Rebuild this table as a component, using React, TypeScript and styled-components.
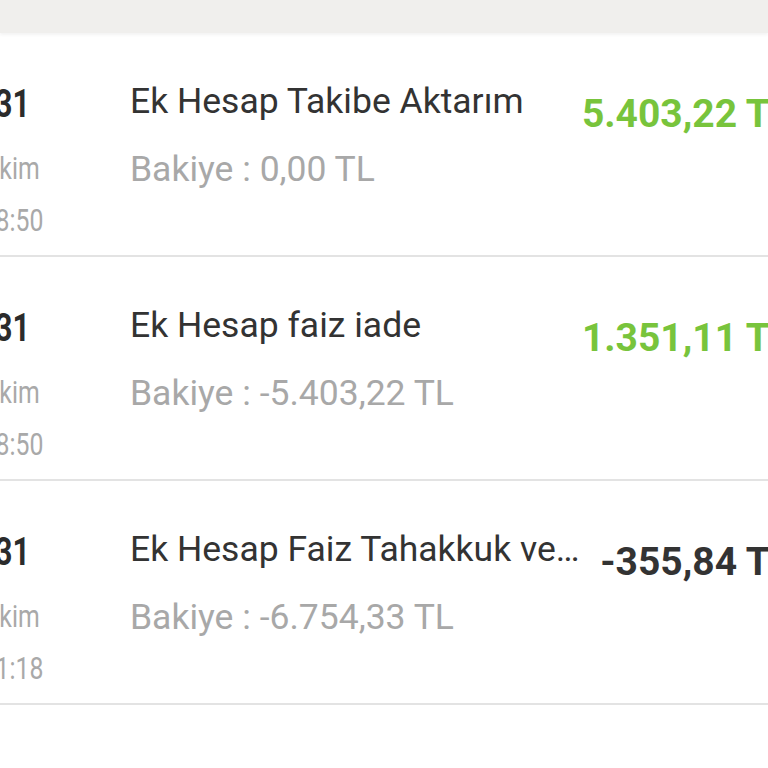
import React from 'react';
import styled, { createGlobalStyle } from 'styled-components';

type TTransaction = {
  day: string;
  month: string;
  time: string;
  title: string;
  balance: string;
  amount: string;
};

const transactions: TTransaction[] = [
  { day: '31', month: 'Ekim', time: '18:50', title: 'Ek Hesap Takibe Aktarım', balance: '0,00 TL', amount: '5.403,22 TL' },
  { day: '31', month: 'Ekim', time: '18:50', title: 'Ek Hesap faiz iade', balance: '-5.403,22 TL', amount: '1.351,11 TL' },
  { day: '31', month: 'Ekim', time: '11:18', title: 'Ek Hesap Faiz Tahakkuk ve Vergi Tahsilatı', balance: '-6.754,33 TL', amount: '-355,84 TL' },
];

const isIncome = (amount: string) => !amount.startsWith('-');

export default function App() {
  return (
    <>
      <GlobalStyle />
      <Page>
        <TopBand />
        <StyledList>
          {transactions.map((t, i) => (
            <Row key={i}>
              {/* DATE (narrow type) */}
              <DateColumn>
                <Day>{t.day}</Day>
                <Month>{t.month}</Month>
                <Time>{t.time}</Time>
              </DateColumn>

              {/* DESCRIPTION */}
              <Details>
                <Title>{t.title}</Title>
                <Balance>Bakiye : {t.balance}</Balance>
              </Details>

              {/* AMOUNT */}
              <Amount $income={isIncome(t.amount)}>{t.amount}</Amount>
            </Row>
          ))}
        </StyledList>
      </Page>
    </>
  );
}

const GlobalStyle = createGlobalStyle`
  html, body {
    margin: 0;
    padding: 0;
    background: #ffffff;
    overflow: hidden;
  }
  body {
    font-family: Roboto, "Liberation Sans", sans-serif;
  }
`;

const Page = styled.div`
  width: 768px;
  height: 768px;
  overflow: hidden;
  background: #ffffff;
`;

const TopBand = styled.div`
  position: relative;
  z-index: 1;
  height: 33px;
  background: #f0efed;
  box-shadow: 0 2px 3px rgba(0, 0, 0, 0.05);
`;

const StyledList = styled.div`
  width: 844px;
  margin-left: -44px;
`;

const Row = styled.div`
  display: flex;
  align-items: flex-start;
  box-sizing: border-box;
  height: 224px;
  padding: 48px 9px 0 0;
  border-bottom: 2px solid #e3e3e3;
`;

const DateColumn = styled.div`
  width: 113px;
  flex-shrink: 0;
  display: flex;
  flex-direction: column;
  align-items: center;
  white-space: nowrap;
  transform: scaleX(0.8);
  transform-origin: 56.5px 0;
`;

const Day = styled.div`
  margin-top: 1px;
  font-size: 38px;
  line-height: 44px;
  font-weight: 700;
  color: #2b2b2b;
`;

const Month = styled.div`
  margin-top: 23px;
  font-size: 31px;
  line-height: 40px;
  color: #a9a9a9;
`;

const Time = styled.div`
  margin-top: 12px;
  font-size: 31px;
  line-height: 40px;
  color: #a9a9a9;
`;

const Details = styled.div`
  flex: 1;
  min-width: 0;
  margin-left: 61px;
  display: flex;
  flex-direction: column;
`;

const Title = styled.div`
  font-size: 35.5px;
  line-height: 40px;
  color: #333333;
  white-space: nowrap;
  overflow: hidden;
  text-overflow: ellipsis;
`;

const Balance = styled.div`
  margin-top: 28px;
  font-size: 35.5px;
  line-height: 40px;
  color: #a8a8a8;
  white-space: nowrap;
`;

const Amount = styled.div<{ $income: boolean }>`
  flex-shrink: 0;
  margin-left: 20px;
  margin-top: 10px;
  font-size: 39px;
  line-height: 46px;
  font-weight: 700;
  white-space: nowrap;
  color: ${({ $income }) => ($income ? '#78c43c' : '#333333')};
`;
